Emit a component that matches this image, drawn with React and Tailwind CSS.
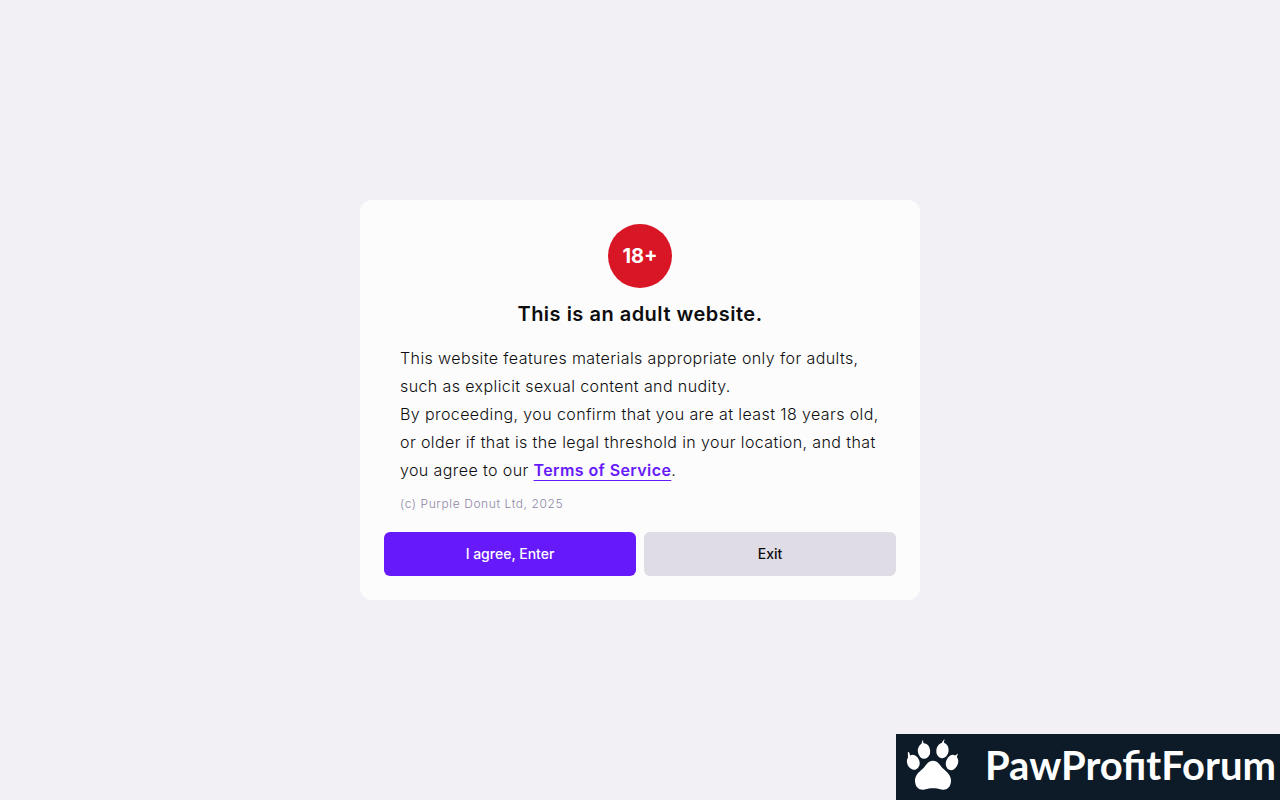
import React from 'react';

const PawIcon = () => (
  <svg viewBox="0 0 54 54" className="w-[54px] h-[54px] shrink-0" fill="#fff" aria-hidden="true">
    {/* Claws */}
    <path d="M3 21 L2.8 14.3 L4 14 L5.5 18.5 Z" />
    <path d="M17 8 L16.6 5 L18 1.5 L18.3 5 L20.5 8 Z" />
    <path d="M36 7 L37.5 3.5 L39.5 1 L39 4 L39.5 7 Z" />
    <path d="M46 19 L49.5 18 L53 15.5 L52 18.5 L51 21 Z" />
    {/* Toes */}
    <ellipse cx="8.3" cy="24.3" rx="6.2" ry="7.6" transform="rotate(-20 8.3 24.3)" />
    <ellipse cx="19" cy="13" rx="6.2" ry="7.8" transform="rotate(-5 19 13)" />
    <ellipse cx="37.5" cy="12.5" rx="6.2" ry="7.8" transform="rotate(8 37.5 12.5)" />
    <ellipse cx="47" cy="24.5" rx="6" ry="7.8" transform="rotate(20 47 24.5)" />
    {/* Pad */}
    <path d="M28 22.7 C33 22.7 34.5 27 38 30.5 C42 34 46.5 37.5 46 43.5 C45.5 49.5 41.5 52.5 36.5 51.5 C33 50.8 31 50.3 28 50.3 C25 50.3 23 50.8 19.5 51.5 C14.5 52.5 10.5 49.5 10 43.5 C9.5 37.5 14 34 18 30.5 C21.5 27 23 22.7 28 22.7 Z" />
  </svg>
);

const AgeGate = () => (
  <section
    aria-labelledby="age-title"
    className="flex flex-col items-center w-full max-w-[560px] rounded-xl bg-[#fcfcfc] p-6"
  >
    <div className="flex items-center justify-center w-16 h-16 rounded-full bg-[#d91626] text-xl font-bold text-white">
      18+
    </div>
    <h1 id="age-title" className="mt-3 text-xl leading-7 font-semibold tracking-wide text-[#0d0d0f]">
      This is an adult website.
    </h1>
    <div className="w-full px-4 mt-4">
      <p className="text-base leading-7 font-light tracking-wide text-[#0d0d0f]">
        This website features materials appropriate only for adults, such as explicit sexual content and nudity.
        <br />
        By proceeding, you confirm that you are at least 18 years old, or older if that is the legal threshold in
        your location, and that you agree to our{' '}
        <a href="#terms" className="font-semibold text-[#6619fa] underline underline-offset-4 decoration-1">
          Terms of Service
        </a>
        .
      </p>
      <p className="mt-2 text-xs leading-6 font-light tracking-wider text-[#8f87a8]">(c) Purple Donut Ltd, 2025</p>
    </div>
    <div className="grid grid-cols-2 gap-2 w-full mt-4">
      <button type="button" className="h-11 rounded-md bg-[#6619fa] text-sm font-medium text-white">
        I agree, Enter
      </button>
      <button type="button" className="h-11 rounded-md bg-[#dfdce5] text-sm font-medium text-[#0d0d0f]">
        Exit
      </button>
    </div>
  </section>
);

export default function App() {
  return (
    <div className="min-h-screen flex items-center justify-center bg-[#f2f0f5] font-['Inter',sans-serif]">
      <AgeGate />
      <div className="fixed right-0 bottom-0 flex items-center justify-between h-[66px] w-96 bg-[#0c1b27] pl-[9px] pr-1 pb-1">
        <PawIcon />
        <span className="font-['Lato',sans-serif] text-[40px] leading-none font-bold text-white">PawProfitForum</span>
      </div>
    </div>
  );
}
